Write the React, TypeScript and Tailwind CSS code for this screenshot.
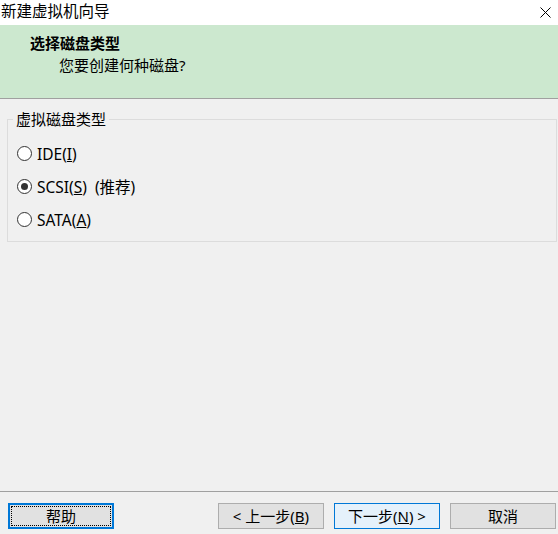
import type { ReactNode } from 'react';

const font = { fontFamily: '"Noto Sans", "Noto Sans CJK SC", sans-serif' };

function Radio({ checked, children }: { checked?: boolean; children: ReactNode }) {
  return (
    <div className="flex h-[33px] items-center gap-[5px]">
      <span className="flex h-[15px] w-[15px] items-center justify-center rounded-full border border-[#333333] bg-white">
        {checked && <span className="h-[7px] w-[7px] rounded-full bg-[#333333]" />}
      </span>
      <span className="text-[15.5px] leading-[20px] text-black">{children}</span>
    </div>
  );
}

function Btn({ children, variant }: { children: ReactNode; variant?: 'focus' | 'default' }) {
  if (variant === 'focus') {
    return (
      <button className="relative h-[26px] w-[106px] border-2 border-[#0078d7] bg-[#e1e1e1] text-[15px] leading-[20px] text-black">
        <span className="absolute inset-[1px] border border-dotted border-black" />
        {children}
      </button>
    );
  }
  return (
    <button
      className={`h-[26px] w-[106px] border text-[15px] leading-[20px] text-black ${
        variant === 'default' ? 'border-[#0078d7] bg-[#e5f1fb]' : 'border-[#adadad] bg-[#e1e1e1]'
      }`}
    >
      {children}
    </button>
  );
}

export default function App() {
  return (
    <div className="flex h-[534px] w-[558px] flex-col overflow-hidden bg-[#f0f0f0]" style={font}>
      {/* Title bar */}
      <div className="flex h-[25px] items-start justify-between bg-white">
        <span className="pl-[1px] pt-[1px] text-[15.5px] leading-[20px] text-black">新建虚拟机向导</span>
        <svg className="mr-[7px] mt-[7px]" width="11" height="11" viewBox="0 0 11 11">
          <path d="M0.5 0.5L10.5 10.5M10.5 0.5L0.5 10.5" stroke="#000" strokeWidth="1" />
        </svg>
      </div>

      {/* Header */}
      <div className="h-[74px] border-b border-[#a0a0a0] bg-[#cce8cf] pt-[8px]">
        <div className="pl-[30px] text-[15px] font-bold leading-[20px] text-black">选择磁盘类型</div>
        <div className="mt-[2px] pl-[59px] text-[15px] leading-[20px] text-black">您要创建何种磁盘?</div>
      </div>

      {/* Body */}
      <div className="flex flex-1 flex-col">
        <fieldset className="ml-[7px] mr-[1px] mt-[12px] border border-[#dcdcdc] pb-[5px] pl-[9px]">
          <legend className="-ml-[4px] px-[3px] text-[15px] leading-[16px] text-black">虚拟磁盘类型</legend>
          <div className="mt-[10px]">
            <Radio>
              IDE(<span className="underline">I</span>)
            </Radio>
            <Radio checked>
              SCSI(<span className="underline">S</span>)<span className="ml-[8px]">(推荐)</span>
            </Radio>
            <Radio>
              SATA(<span className="underline">A</span>)
            </Radio>
          </div>
        </fieldset>
      </div>

      {/* Footer */}
      <div className="border-t border-[#a0a0a0] pb-[5px] pl-[8px] pr-[2px] pt-[11px]">
        <div className="flex items-center">
          <Btn variant="focus">帮助</Btn>
          <div className="ml-auto flex gap-[10px]">
            <Btn>
              &lt; 上一步(<span className="underline">B</span>)
            </Btn>
            <Btn variant="default">
              下一步(<span className="underline">N</span>) &gt;
            </Btn>
            <Btn>取消</Btn>
          </div>
        </div>
      </div>
    </div>
  );
}
